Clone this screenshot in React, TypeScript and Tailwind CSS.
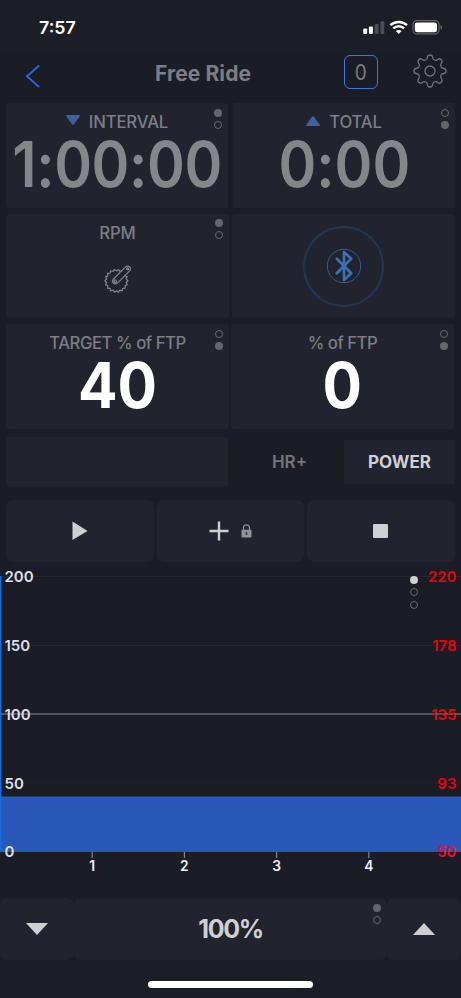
import type { ReactNode } from 'react';
import clsx from 'clsx';

const Dots = ({
  count = 2,
  active,
  bright,
  className,
}: {
  count?: number;
  active: number;
  bright?: boolean;
  className?: string;
}) => (
  <div className={clsx('absolute flex flex-col gap-[4.4px]', className)}>
    {Array.from({ length: count }, (_, i) => (
      <span
        key={i}
        className={clsx(
          'size-[8px] rounded-full',
          i === active
            ? bright
              ? 'bg-[#d0d0d2]'
              : 'bg-[#64656d]'
            : 'border border-[#686970]',
        )}
      />
    ))}
  </div>
);

const Card = ({
  title,
  dot,
  dotClass,
  icon,
  className,
  children,
}: {
  title: string;
  dot: number;
  dotClass: string;
  icon?: ReactNode;
  className?: string;
  children: ReactNode;
}) => (
  <div
    className={clsx(
      'relative flex flex-col items-center rounded-[3px] bg-[#21232f]',
      className,
    )}
  >
    <div className="flex h-[38px] items-center whitespace-nowrap text-[16.7px] leading-none font-medium tracking-[-0.15px] text-[#7d7e83]">
      {icon}
      {title}
    </div>
    {children}
    <Dots active={dot} className={dotClass} />
  </div>
);

const StatusIcons = () => (
  <svg width="80" height="16" viewBox="0 0 80 16" fill="#fff">
    <rect x="0.2" y="8.6" width="4" height="5.4" rx="1" />
    <rect x="5.9" y="6.6" width="4" height="7.4" rx="1" />
    <rect x="11.6" y="4" width="4" height="10" rx="1" fill="#4c4d56" />
    <rect x="17.3" y="1.2" width="4" height="12.8" rx="1" fill="#4c4d56" />
    <g fill="none" stroke="#fff" strokeWidth="2.5">
      <path d="M27.4 5.2c4.6-4.4 12-4.4 16.6 0" />
      <path d="M30.3 8.4c3-2.9 7.8-2.9 10.8 0" />
    </g>
    <path d="M32.8 11.1c1.7-1.5 4.1-1.5 5.8 0l-2.9 2.9z" />
    <rect x="50" y="0.7" width="26" height="13.2" rx="4" fill="none" stroke="#62636b" strokeWidth="1.2" />
    <rect x="51.8" y="2.4" width="22.2" height="9.9" rx="2.4" />
    <path d="M77.5 5v4.6c1-.4 1.6-1.2 1.6-2.3S78.5 5.4 77.5 5z" fill="#62636b" />
  </svg>
);

const GearIcon = () => (
  <svg width="34" height="34" viewBox="-17 -17 34 34" fill="none" stroke="#74757b" strokeWidth="1.3" strokeLinejoin="round">
    {/* one tooth, repeated every 45 degrees */}
    {[0, 45, 90, 135, 180, 225, 270, 315].map((deg) => (
      <path
        key={deg}
        transform={`rotate(${deg})`}
        d="M-4.5 -10.9C-3.2 -11.2 -2.7 -12.2 -2.5 -14C-2.3 -15.5 -1.5 -16 0 -16C1.5 -16 2.3 -15.5 2.5 -14C2.7 -12.2 3.2 -11.2 4.5 -10.9"
      />
    ))}
    <circle r="5" />
  </svg>
);

// jagged outline of the chainring
const ringPoints = Array.from({ length: 36 }, (_, i) => {
  const r = i % 2 ? 9.9 : 11.6;
  const a = (i * Math.PI) / 18;
  return `${(12.4 + r * Math.cos(a)).toFixed(2)},${(15.8 + r * Math.sin(a)).toFixed(2)}`;
}).join(' ');

const CrankIcon = () => (
  <svg width="28" height="28" viewBox="0 0 28 28" fill="none" stroke="#85868c" strokeWidth="1.2" strokeLinejoin="round">
    <polygon points={ringPoints} />
    <path d="M9.1 14.3 21.6 1.9a2.8 2.8 0 0 1 4 4L13.2 18.3a2.9 2.9 0 0 1-4.1-4z" fill="#21232f" />
    <circle cx="11.2" cy="16.2" r="1.3" />
    <circle cx="23.6" cy="3.9" r="1" />
  </svg>
);

const BluetoothIcon = () => (
  <div className="flex size-[81px] items-center justify-center rounded-full border-[2.5px] border-[#25364e]">
    <svg width="36" height="36" viewBox="0 0 36 36" fill="none" stroke="#3d70b3">
      <circle cx="18" cy="18" r="16.7" stroke="#315c96" strokeWidth="1" />
      <path
        d="m10.8 10.8 14.4 14.4-7.2 6.8V4l7.2 6.8-14.4 14.4"
        strokeWidth="2.7"
        strokeLinecap="round"
        strokeLinejoin="round"
      />
    </svg>
  </div>
);

const levels = [
  { y: 15.5, left: '200', right: '220' },
  { y: 84.5, left: '150', right: '178' },
  { y: 153, left: '100', right: '135' },
  { y: 222, left: '50', right: '93' },
  { y: 290.5, left: '0', right: '50' },
];

const Chart = () => (
  <div className="relative h-[337px]">
    <svg width="461" height="337" viewBox="0 0 461 337" className="block font-semibold">
      {levels.slice(0, 4).map((l) => (
        <line
          key={l.y}
          x2="461"
          y1={l.y}
          y2={l.y}
          stroke={l.left === '100' ? '#50535b' : '#242630'}
          strokeWidth={l.left === '100' ? 2 : 1}
        />
      ))}
      <rect y="235.5" width="461" height="55.5" fill="#2958b8" />
      <rect y="15" width="1.4" height="276" fill="#176de0" />
      {levels.map((l) => (
        <g key={l.y} fontSize="15">
          <text x="4.5" y={l.y + 5.5} fill="#dedfe3">
            {l.left}
          </text>
          <text
            x="456.5"
            y={l.y + 5.5}
            textAnchor="end"
            fill={l.right === '50' ? '#e61035' : '#f00006'}
          >
            {l.right}
          </text>
        </g>
      ))}
      {[1, 2, 3, 4].map((n) => (
        <g key={n}>
          <line x1={n * 92.2} x2={n * 92.2} y1="291" y2="297" stroke="#85868b" strokeWidth="1.2" />
          <text x={n * 92.2} y="309.5" textAnchor="middle" fontSize="13.8" fill="#f0f0f2">
            {n}
          </text>
        </g>
      ))}
    </svg>
    <Dots count={3} active={0} bright className="top-[15px] left-[410px]" />
  </div>
);

const App = () => {
  return (
    <div className="flex h-[998px] w-[461px] flex-col overflow-hidden bg-[#1a1c26] font-['Inter','Liberation_Sans',sans-serif]">
      <div className="flex h-[53px] shrink-0 items-start justify-between bg-[#1c1e26] pt-[20px] pr-[18px] pl-[39px]">
        <span className="mt-[-1px] text-[17.8px] leading-[18px] font-semibold text-white">7:57</span>
        <StatusIcons />
      </div>

      <header className="flex h-[50px] shrink-0 items-start">
        <svg className="mt-[11px] ml-[25px]" width="16" height="24" viewBox="0 0 16 24" fill="none" stroke="#2c68dc" strokeWidth="1.9">
          <path d="M14.2 1.5 2 12.3l12.2 10.8" />
        </svg>
        <h1 className="ml-[114px] w-[98px] whitespace-nowrap pt-[9px] text-[21px] leading-[24px] font-bold tracking-[0.1px] text-[#7d7e83]">
          Free Ride
        </h1>
        <div className="mt-[2px] ml-[91px] flex size-[34px] items-center justify-center rounded-[6px] border-[1.5px] border-[#3778dc] text-[21px] text-[#7d7e83]">
          <span className="mt-[1px] scale-x-90">0</span>
        </div>
        <div className="mt-[1px] ml-[35px]">
          <GearIcon />
        </div>
      </header>

      <div className="flex shrink-0 gap-[5px] pl-[6px]">
        <Card
          title="INTERVAL"
          dot={0}
          dotClass="top-[6px] right-[6px]"
          className="h-[105px] w-[222px]"
          icon={
            <svg className="mt-[-4px] mr-[9px]" width="14" height="10" viewBox="0 0 14 10" fill="#415f9d">
              <path d="M1 0h12q1.5.4.6 1.6L8 9.2q-1 1.2-2 0L.4 1.6Q-.5.4 1 0z" />
            </svg>
          }
        >
          <div className="mt-[-9px] scale-x-[0.91] whitespace-nowrap text-[63px] leading-[64px] font-semibold tracking-[-0.4px] text-[#85868b] [font-feature-settings:'calt'_0]">
            1:00:00
          </div>
        </Card>
        <Card
          title="TOTAL"
          dot={1}
          dotClass="top-[6px] right-[6px]"
          className="h-[105px] w-[222px]"
          icon={
            <svg className="mt-[-2px] mr-[9px]" width="14" height="10" viewBox="0 0 14 10" fill="#415f9d">
              <path d="M1 10h12q1.5-.4.6-1.6L8 .8q-1-1.2-2 0L.4 8.4Q-.5 9.6 1 10z" />
            </svg>
          }
        >
          <div className="mt-[-9px] scale-x-[0.91] whitespace-nowrap text-[63px] leading-[64px] font-semibold text-[#85868b] [font-feature-settings:'calt'_0]">
            0:00
          </div>
        </Card>
      </div>

      <div className="mt-[6px] flex shrink-0 gap-[3px] pl-[6px]">
        <Card title="RPM" dot={0} dotClass="top-[5px] right-[6px]" className="h-[104px] w-[223px]">
          <div className="mt-[13px]">
            <CrankIcon />
          </div>
        </Card>
        <div className="flex h-[104px] w-[223px] items-center justify-center rounded-[3px] bg-[#21232f]">
          <BluetoothIcon />
        </div>
      </div>

      <div className="mt-[6px] flex shrink-0 gap-[2px] pl-[6px]">
        <Card
          title="TARGET % of FTP"
          dot={1}
          dotClass="top-[6px] right-[6px]"
          className="h-[105px] w-[223px] [&>div:first-child]:tracking-[-0.45px]"
        >
          <div className="mt-[-9px] scale-x-[0.93] text-[63px] leading-[64px] font-bold text-white">40</div>
        </Card>
        <Card
          title="% of FTP"
          dot={1}
          dotClass="top-[6px] right-[6px]"
          className="h-[105px] w-[223px] [&>div:first-child]:tracking-[-0.5px]"
        >
          <div className="mt-[-9px] scale-x-[0.93] text-[63px] leading-[64px] font-bold text-white">0</div>
        </Card>
      </div>

      <div className="mt-[8px] flex h-[50px] shrink-0 items-start pl-[6px]">
        <div className="h-full w-[222px] rounded-[3px] bg-[#21232f]" />
        <div className="mt-[3px] ml-[5px] flex h-[44px] text-[17px]">
          <button className="w-[111px] bg-[#1b1d25] pt-[2px] pl-[2px] font-semibold text-[#74757a]">HR+</button>
          <button className="w-[111px] bg-[#21232f] pt-[2px] font-bold text-[#d0d0d3]">POWER</button>
        </div>
      </div>

      <div className="mt-[13px] flex h-[62px] shrink-0 gap-[3px] pl-[6px]">
        <button className="flex w-[148px] items-center justify-center rounded-[7px] bg-[#21232f]">
          <svg width="16" height="20" viewBox="0 0 16 20" fill="#d0d0d3">
            <path d="M.5.5 15.5 10 .5 19z" />
          </svg>
        </button>
        <button className="flex w-[147px] items-center justify-center gap-[12px] rounded-[7px] bg-[#21232f] pr-[1px]">
          <svg width="20" height="20" viewBox="0 0 20 20" stroke="#d0d0d3" strokeWidth="2.4">
            <path d="M.5 10h19M10 .5v19" />
          </svg>
          <svg width="11" height="14" viewBox="0 0 11 14">
            <path d="M2.5 6V3.8a3 3 0 0 1 6 0V6" fill="none" stroke="#929397" strokeWidth="1.2" />
            <rect x="0.5" y="5.7" width="10" height="7.8" rx="1" fill="#929397" />
            <path d="M5.5 8v3" stroke="#34353d" strokeWidth="1.5" />
          </svg>
        </button>
        <button className="flex w-[148px] items-center justify-center rounded-[7px] bg-[#21232f] pr-[1px]">
          <span className="size-[14.5px] rounded-[1px] bg-[#d0d0d3]" />
        </button>
      </div>

      <div className="mt-[-1px] shrink-0">
        <Chart />
      </div>

      <div className="flex h-[62px] shrink-0">
        <button className="flex w-[74px] items-center justify-center rounded-[7px] bg-[#21232f]">
          <svg width="22" height="12" viewBox="0 0 22 12" fill="#d0d0d3">
            <path d="M0 0h22L11 12z" />
          </svg>
        </button>
        <div className="relative flex w-[313px] items-center justify-center rounded-[7px] bg-[#21232f] pt-[2px] text-[25px] font-bold tracking-[-1.3px] text-[#d0d0d3]">
          100%
          <Dots active={0} className="top-[6px] right-[6px]" />
        </div>
        <button className="flex w-[74px] items-center justify-center rounded-[7px] bg-[#21232f]">
          <svg width="22" height="12" viewBox="0 0 22 12" fill="#d0d0d3">
            <path d="M0 12h22L11 0z" />
          </svg>
        </button>
      </div>

      <div className="flex grow items-start justify-center bg-[#1c1e26] pt-[21px]">
        <div className="h-[7px] w-[165px] rounded-full bg-white" />
      </div>
    </div>
  );
};

export default App;
